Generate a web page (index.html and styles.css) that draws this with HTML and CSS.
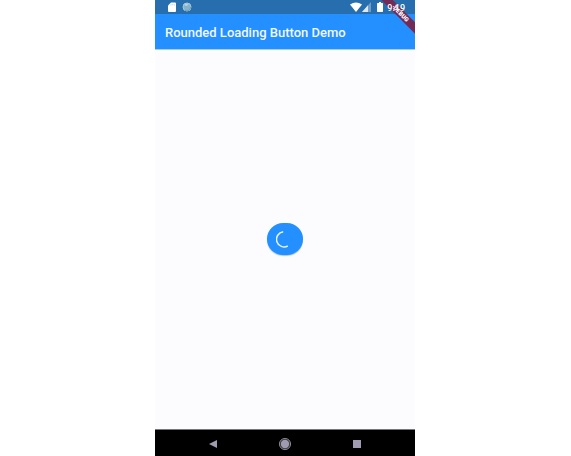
FILE: index.html
```html
<!DOCTYPE html>
<html lang="en">
<head>
<meta charset="utf-8">
<meta name="viewport" content="width=device-width, initial-scale=1">
<title>Rounded Loading Button Demo</title>
<link rel="stylesheet" href="styles.css">
</head>
<body>
<div class="phone">
  <div class="status-bar">
    <svg class="sd-icon" viewBox="0 0 8 10" aria-hidden="true"><path d="M3 0.5H7Q8 0.5 8 1.5V9Q8 10 7 10H1Q0 10 0 9V3.5Z" fill="#fff"/><path d="M3 2v1.5M4.700 2v1.500M6.300 2v1.500" stroke="#a9c8e2" stroke-width=".6"/></svg>
    <svg class="sync-icon" viewBox="0 0 10 10" aria-hidden="true"><circle cx="5" cy="5" r="4" fill="#86b3cc" stroke="#a8c8d8"/><path d="M2 3A4 4 0 0 1 6.500 2L5 4Z" fill="#b9d3df"/><path d="M8.500 5A3.500 3.500 0 0 1 3 8.200" fill="none" stroke="#659bb9"/></svg>
    <span class="status-space"></span>
    <svg class="wifi-icon" viewBox="0 0 12 10" aria-hidden="true"><path d="M0 2.500Q6-1.500 12 2.500L6 10Z" fill="#fff"/></svg>
    <svg class="signal-icon" viewBox="0 0 9 10" aria-hidden="true"><path d="M9 0V10H0Z" fill="#6e9fc8"/><path d="M6 3.300V10H0Z" fill="#dce9f3"/></svg>
    <svg class="battery-icon" viewBox="0 0 6 10" aria-hidden="true"><path d="M2 0H4V1H5.500L6 1.500V9.500L5.500 10H.5L0 9.500V1.500L.5 1H2Z" fill="#fff"/></svg>
    <time class="clock">9:19</time>
  </div>
  <header class="app-bar"><h1 class="title">Rounded Loading Button Demo</h1></header>
  <main class="content">
    <button class="loading-button" type="button" aria-label="Loading">
      <svg class="spinner" viewBox="0 0 18 18" aria-hidden="true"><path d="M7.200 1.800A7.600 7.600 0 1 0 11.800 16" fill="none" stroke="#e5f2ff" stroke-width="1.500"/></svg>
    </button>
  </main>
  <nav class="nav-bar" aria-label="System">
    <button class="nav-button" type="button" aria-label="Back"><svg class="nav-icon" viewBox="0 0 14 14" aria-hidden="true"><path d="M11 3V11L3 7Z" fill="#9f9bb0"/></svg></button>
    <button class="nav-button" type="button" aria-label="Home"><svg class="nav-icon" viewBox="0 0 14 14" aria-hidden="true"><circle cx="7" cy="7" r="5.600" fill="#34343a" stroke="#85858c" stroke-width="1"/><circle cx="7" cy="7" r="4.200" fill="#9f9bb0"/></svg></button>
    <button class="nav-button" type="button" aria-label="Overview"><svg class="nav-icon" viewBox="0 0 14 14" aria-hidden="true"><path d="M3 3H11V11H3Z" fill="#9f9bb0"/></svg></button>
  </nav>
  <div class="debug-corner"><span class="debug-ribbon">DEBUG</span></div>
</div>
</body>
</html>
```
FILE: styles.css
```css
* { box-sizing: border-box; }

body {
  margin: 0;
  padding-right: 1px;
  background: #fff;
  font-family: Roboto, sans-serif;
}

.phone {
  position: relative;
  display: flex;
  flex-direction: column;
  width: 100%;
  max-width: 260px;
  min-height: 100vh;
  margin: 0 auto;
  background: #fcfcff;
}

.status-bar {
  display: flex;
  align-items: center;
  height: 14px;
  padding: 0 10px 0 13px;
  background: #266ead;
}

.sd-icon { width: 8px; height: 10px; margin-right: 6px; }
.sync-icon { width: 10px; height: 10px; }
.status-space { flex: 1; }
.wifi-icon { width: 12px; height: 10px; }
.signal-icon { width: 9px; height: 10px; margin-right: 6px; }
.battery-icon { width: 6px; height: 10px; margin-right: 4px; }

.clock {
  position: relative;
  z-index: 2;
  padding-top: 1px;
  color: #fff;
  font-size: 9px;
  font-weight: 500;
  line-height: 14px;
}

.app-bar {
  display: flex;
  align-items: center;
  height: 36px;
  padding: 2px 10px 0;
  background: #248fff;
  border-bottom: 1px solid #a6cdf6;
}

.title {
  margin: 0;
  color: #f2f8ff;
  font-size: 13px;
  font-weight: 500;
  line-height: 18px;
  white-space: nowrap;
}

.content {
  flex: 1;
  display: flex;
  align-items: center;
  justify-content: center;
  padding-bottom: 2px;
}

.loading-button {
  display: flex;
  align-items: center;
  justify-content: center;
  width: 36px;
  height: 32px;
  padding: 0;
  border: 0;
  border-radius: 16px;
  background: #248fff;
  box-shadow: 0 1px 1px #a9c4e4;
}

.spinner { width: 18px; height: 18px; }

.nav-bar {
  display: flex;
  justify-content: center;
  height: 27px;
  background: #000;
  border-top: 1px solid #77777a;
}

.nav-button {
  display: flex;
  align-items: center;
  justify-content: center;
  width: 72px;
  padding: 2px 0 0;
  border: 0;
  background: transparent;
}

.nav-icon { width: 14px; height: 14px; }

.debug-corner {
  position: absolute;
  top: 0;
  right: 0;
  width: 40px;
  height: 40px;
  overflow: hidden;
}

.debug-ribbon {
  position: absolute;
  top: 10px;
  left: -4px;
  width: 60px;
  height: 8px;
  background: #722b57;
  color: #fff;
  font-size: 6px;
  font-weight: 900;
  line-height: 8px;
  text-align: center;
  transform: rotate(45deg);
}
```
